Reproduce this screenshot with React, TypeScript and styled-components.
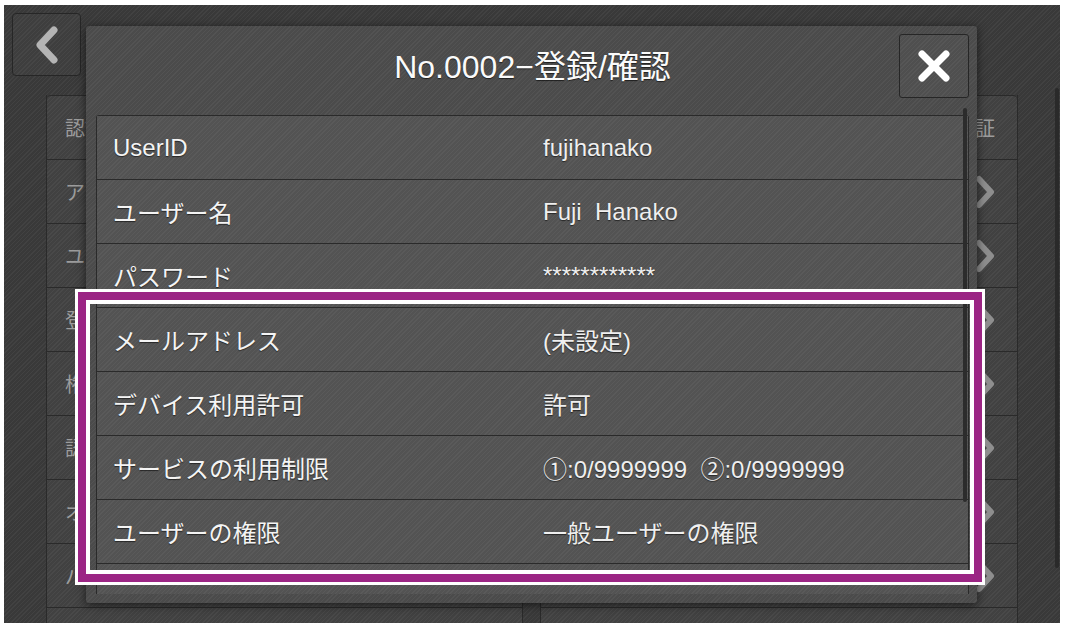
import React from "react";
import styled, { createGlobalStyle } from "styled-components";

const GlobalStyle = createGlobalStyle`
  html, body {
    margin: 0;
    padding: 0;
    background: #fff;
  }
  body {
    font-family: "Liberation Sans", "Noto Sans CJK JP", sans-serif;
  }
`;

const stripes = (base: string) =>
  `repeating-linear-gradient(135deg, rgba(255,255,255,0.045) 0 1px, transparent 1px 3px), ${base}`;

const Screen = styled.div`
  position: relative;
  margin: 5px 0 0 4px;
  width: 1056px;
  height: 618px;
  padding: 8px 0 0 8px;
  box-sizing: border-box;
  overflow: hidden;
  background: ${stripes("#393939")};
`;

const TopBar = styled.div`
  display: flex;
  height: 63px;
`;

const BackButton = styled.div`
  width: 69px;
  height: 63px;
  box-sizing: border-box;
  border: 1px solid #262626;
  border-radius: 4px;
  display: flex;
  align-items: center;
  justify-content: center;
  background: ${stripes("#3e3e3e")};
`;

const Menu = styled.div`
  display: grid;
  grid-template-columns: 477px 478px;
  column-gap: 17px;
  margin: 19px 0 0 34px;
`;

const MenuColumn = styled.div`
  display: flex;
  flex-direction: column;
  border-left: 1px solid #2a2a2a;
  border-right: 1px solid #2a2a2a;
`;

const MenuRow = styled.div<{ $head?: boolean; $alignRight?: boolean }>`
  height: 64px;
  box-sizing: border-box;
  border-top: 1px solid #2a2a2a;
  border-radius: ${(p) => (p.$head ? "4px 4px 0 0" : "0")};
  display: flex;
  align-items: center;
  justify-content: ${(p) => (p.$alignRight ? "flex-end" : "space-between")};
  padding: 0 22px 0 18px;
  color: #9c9c9c;
  font-size: 20px;
  background: ${stripes("#414141")};
`;

const PageScrollbar = styled.div`
  position: absolute;
  left: 1051px;
  top: 83px;
  width: 4px;
  height: 480px;
  border-radius: 2px;
  background: #2a2a2a;
`;

const Modal = styled.div`
  position: absolute;
  left: 82px;
  top: 21px;
  width: 891px;
  height: 577px;
  box-sizing: border-box;
  padding: 8px 8px 9px 10px;
  display: flex;
  flex-direction: column;
  border-radius: 3px;
  box-shadow: 0 2px 10px rgba(0, 0, 0, 0.6);
  background: ${stripes("#4b4b4b")};
`;

const ModalHeader = styled.div`
  display: grid;
  grid-template-columns: 70px 1fr 70px;
  align-items: center;
  height: 64px;
  margin-bottom: 17px;
`;

const Title = styled.div`
  grid-column: 2;
  text-align: center;
  color: #fafafa;
  font-size: 32px;
  margin-top: -4px;
  text-shadow: 0 1px 1px rgba(0, 0, 0, 0.6);
`;

const CloseButton = styled.div`
  grid-column: 3;
  width: 70px;
  height: 64px;
  box-sizing: border-box;
  border: 1px solid #262626;
  border-radius: 3px;
  display: flex;
  align-items: center;
  justify-content: center;
  background: ${stripes("#4f4f4f")};
`;

const Table = styled.div`
  flex: 1;
  overflow: hidden;
  border-left: 1px solid #2a2a2a;
  border-right: 1px solid #2a2a2a;
  border-radius: 3px 3px 0 0;
`;

const Row = styled.div`
  display: grid;
  grid-template-columns: 446px 1fr;
  align-items: center;
  height: 64px;
  box-sizing: border-box;
  border-top: 1px solid #2a2a2a;
  color: #f4f4f4;
  font-size: 24px;
  text-shadow: 0 1px 1px rgba(0, 0, 0, 0.55);
  background: ${stripes("#535353")};
`;

const Label = styled.div`
  padding-left: 16px;
`;

const Value = styled.div`
  white-space: pre;
  color: #efefef;
`;

const ModalScrollbar = styled.div`
  position: absolute;
  left: 877px;
  top: 82px;
  width: 4px;
  height: 394px;
  border-radius: 2px;
  background: #2c2c2c;
`;

const Highlight = styled.div`
  position: absolute;
  left: 74px;
  top: 287px;
  width: 904px;
  height: 290px;
  box-sizing: border-box;
  border: 8px solid #9b2584;
  box-shadow: 0 0 0 3px #fff, inset 0 0 0 4px #fff;
`;

const ChevronLeft = () => (
  <svg width="24" height="40" viewBox="0 0 24 40">
    <polyline
      points="19,5 5,20 19,35"
      fill="none"
      stroke="#b4b4b4"
      strokeWidth="7"
      strokeLinecap="round"
      strokeLinejoin="round"
    />
  </svg>
);

const ChevronRight = () => (
  <svg width="20" height="34" viewBox="0 0 20 34">
    <polyline
      points="4,4 16,17 4,30"
      fill="none"
      stroke="#8e8e8e"
      strokeWidth="6"
      strokeLinecap="round"
      strokeLinejoin="round"
    />
  </svg>
);

const CloseIcon = () => (
  <svg width="34" height="34" viewBox="0 0 34 34">
    <g stroke="#fff" strokeWidth="7" strokeLinecap="round">
      <line x1="5" y1="5" x2="29" y2="29" />
      <line x1="29" y1="5" x2="5" y2="29" />
    </g>
  </svg>
);

const leftMenu = [
  "アカウントの設定",
  "ユーザー情報の設定",
  "登録/確認",
  "権限グループの登録",
  "認証方式の設定",
  "オプション設定",
  "パスワード運用",
  "その他の設定",
];

const rightMenu = [
  "ICカードの設定",
  "ネットワーク認証",
  "ローカル認証",
  "リモート認証",
  "認証サーバー",
  "外部アカウント",
  "ジョブ制限",
  "ログ設定",
];

const userRows: { label: string; value: string }[] = [
  { label: "UserID", value: "fujihanako" },
  { label: "ユーザー名", value: "Fuji  Hanako" },
  { label: "パスワード", value: "************" },
  { label: "メールアドレス", value: "(未設定)" },
  { label: "デバイス利用許可", value: "許可" },
  { label: "サービスの利用制限", value: "①:0/9999999  ②:0/9999999" },
  { label: "ユーザーの権限", value: "一般ユーザーの権限" },
  { label: "", value: "" },
];

const App = () => {
  return (
    <>
      <GlobalStyle />
      <Screen>
        <TopBar>
          <BackButton>
            <ChevronLeft />
          </BackButton>
        </TopBar>
        <Menu>
          <MenuColumn>
            <MenuRow $head>認証/セキュリティ設定</MenuRow>
            {leftMenu.map((item) => (
              <MenuRow key={item}>
                {item}
                <ChevronRight />
              </MenuRow>
            ))}
          </MenuColumn>
          <MenuColumn>
            <MenuRow $head $alignRight>
              外部認証
            </MenuRow>
            {rightMenu.map((item) => (
              <MenuRow key={item}>
                {item}
                <ChevronRight />
              </MenuRow>
            ))}
          </MenuColumn>
        </Menu>
        <PageScrollbar />

        <Modal>
          <ModalHeader>
            <Title>No.0002−登録/確認</Title>
            <CloseButton>
              <CloseIcon />
            </CloseButton>
          </ModalHeader>
          <Table>
            {userRows.map((row, i) => (
              <Row key={i}>
                <Label>{row.label}</Label>
                <Value>{row.value}</Value>
              </Row>
            ))}
          </Table>
          <ModalScrollbar />
        </Modal>

        <Highlight />
      </Screen>
    </>
  );
};

export default App;
